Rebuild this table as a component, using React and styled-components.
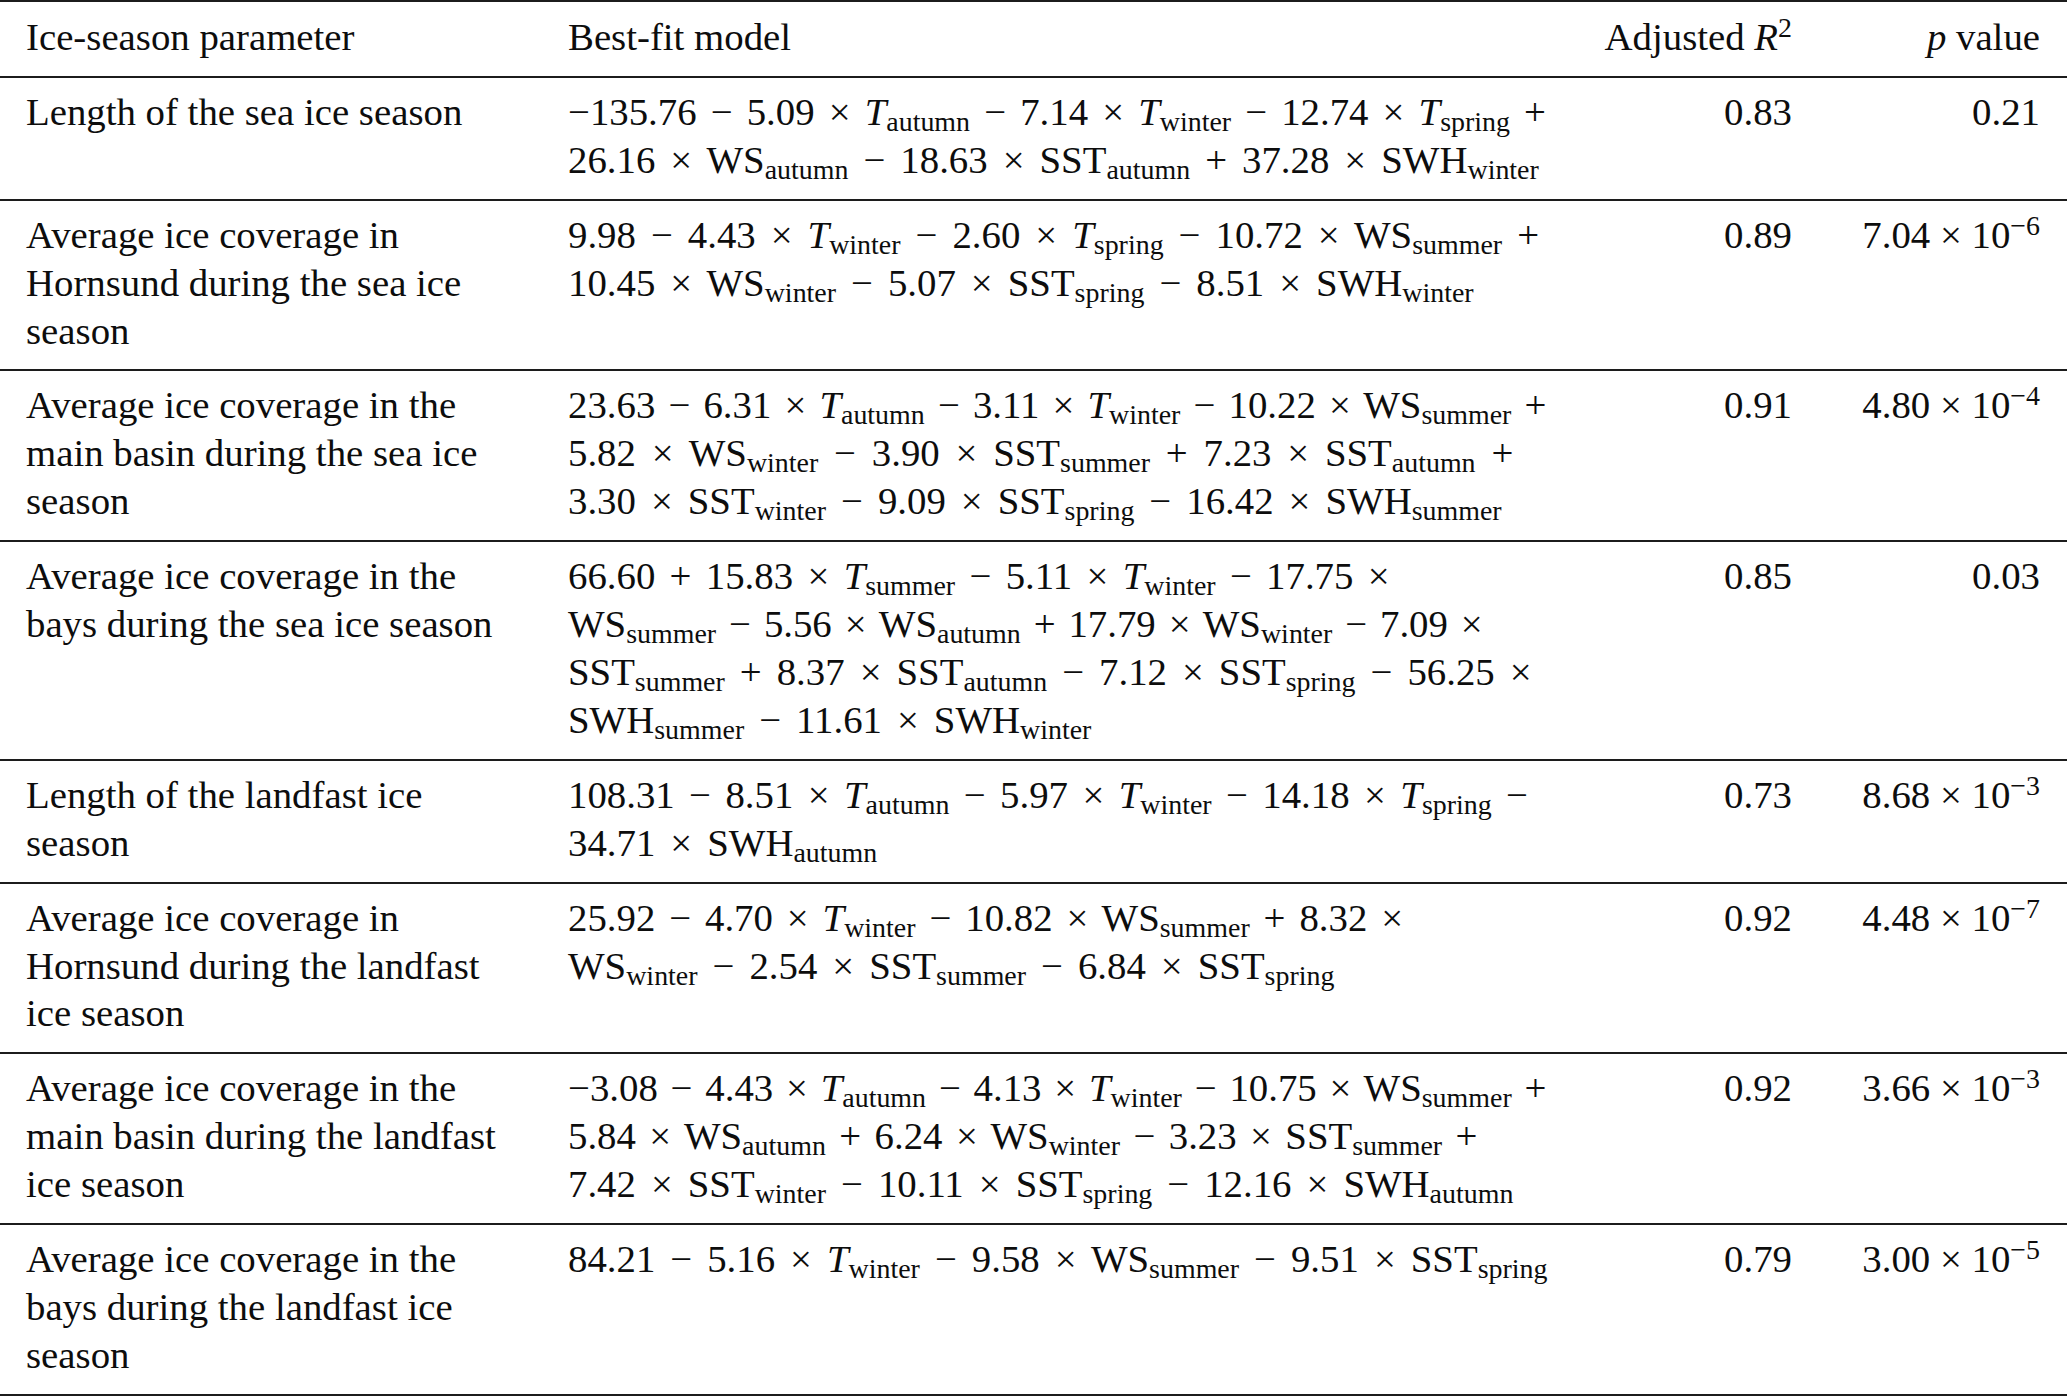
import React from 'react';
import styled, { createGlobalStyle } from 'styled-components';

const GlobalStyle = createGlobalStyle`
  html, body {
    margin: 0;
    padding: 0;
    background: #ffffff;
  }
  body {
    font-family: "Liberation Serif", "Times New Roman", serif;
    color: #111111;
  }
`;

const rows = [
  {
    param: ['Length of the sea ice season'],
    model: [
      ['−135.76 − 5.09 × T_autumn − 7.14 × T_winter − 12.74 × T_spring +', 4.4],
      ['26.16 × WS_autumn − 18.63 × SST_autumn + 37.28 × SWH_winter'],
    ],
    r2: '0.83',
    p: { value: '0.21' },
  },
  {
    param: ['Average ice coverage in', 'Hornsund during the sea ice', 'season'],
    model: [
      ['9.98 − 4.43 × T_winter − 2.60 × T_spring − 10.72 × WS_summer +'],
      ['10.45 × WS_winter − 5.07 × SST_spring − 8.51 × SWH_winter'],
    ],
    r2: '0.89',
    p: { value: '7.04', exp: '−6' },
  },
  {
    param: ['Average ice coverage in the', 'main basin during the sea ice', 'season'],
    model: [
      ['23.63 − 6.31 × T_autumn − 3.11 × T_winter − 10.22 × WS_summer +', 3.4],
      ['5.82 × WS_winter − 3.90 × SST_summer + 7.23 × SST_autumn +', 6.1],
      ['3.30 × SST_winter − 9.09 × SST_spring − 16.42 × SWH_summer'],
    ],
    r2: '0.91',
    p: { value: '4.80', exp: '−4' },
  },
  {
    param: ['Average ice coverage in the', 'bays during the sea ice season'],
    model: [
      ['66.60 + 15.83 × T_summer − 5.11 × T_winter − 17.75 ×', 4.6],
      ['WS_summer − 5.56 × WS_autumn + 17.79 × WS_winter − 7.09 ×', 3.2],
      ['SST_summer + 8.37 × SST_autumn − 7.12 × SST_spring − 56.25 ×'],
      ['SWH_summer − 11.61 × SWH_winter'],
    ],
    r2: '0.85',
    p: { value: '0.03' },
  },
  {
    param: ['Length of the landfast ice', 'season'],
    model: [
      ['108.31 − 8.51 × T_autumn − 5.97 × T_winter − 14.18 × T_spring −', 4.7],
      ['34.71 × SWH_autumn'],
    ],
    r2: '0.73',
    p: { value: '8.68', exp: '−3' },
  },
  {
    param: ['Average ice coverage in', 'Hornsund during the landfast', 'ice season'],
    model: [
      ['25.92 − 4.70 × T_winter − 10.82 × WS_summer + 8.32 ×', 4.2],
      ['WS_winter − 2.54 × SST_summer − 6.84 × SST_spring'],
    ],
    r2: '0.92',
    p: { value: '4.48', exp: '−7' },
  },
  {
    param: ['Average ice coverage in the', 'main basin during the landfast', 'ice season'],
    model: [
      ['−3.08 − 4.43 × T_autumn − 4.13 × T_winter − 10.75 × WS_summer +', 3.1],
      ['5.84 × WS_autumn + 6.24 × WS_winter − 3.23 × SST_summer +', 3.7],
      ['7.42 × SST_winter − 10.11 × SST_spring − 12.16 × SWH_autumn'],
    ],
    r2: '0.92',
    p: { value: '3.66', exp: '−3' },
  },
  {
    param: ['Average ice coverage in the', 'bays during the landfast ice', 'season'],
    model: [['84.21 − 5.16 × T_winter − 9.58 × WS_summer − 9.51 × SST_spring']],
    r2: '0.79',
    p: { value: '3.00', exp: '−5' },
  },
];

/* token like "T_winter" -> italic T with subscript, "WS_summer" -> roman WS */
const Token = ({ tok }) => {
  if (!tok.includes('_')) return tok;
  const [base, sub] = tok.split('_');
  return (
    <>
      {base === 'T' ? <Var>{base}</Var> : base}
      <Sub>{sub}</Sub>
    </>
  );
};

const Formula = ({ text }) =>
  text.split(' ').map((tok, i) => (
    <React.Fragment key={i}>
      {i > 0 && ' '}
      <Token tok={tok} />
    </React.Fragment>
  ));

const PValue = ({ p }) => (
  <>
    {p.value}
    {p.exp && (
      <>
        {' × 10'}
        <Sup>{p.exp}</Sup>
      </>
    )}
  </>
);

const App = () => {
  return (
    <>
      <GlobalStyle />
      <Table>
        <HeadRow>
          <Cell>
            <Line>Ice-season parameter</Line>
          </Cell>
          <Cell>
            <Line>Best-fit model</Line>
          </Cell>
          <Cell $align="right">
            <Line>
              Adjusted <Var>R</Var>
              <Sup>2</Sup>
            </Line>
          </Cell>
          <Cell $align="right">
            <Line>
              <Var>p</Var> value
            </Line>
          </Cell>
        </HeadRow>
        {rows.map((row, i) => (
          <Row key={i}>
            <Cell>
              {row.param.map((line, j) => (
                <Line key={j}>{line}</Line>
              ))}
            </Cell>
            <Cell>
              {row.model.map(([text, spacing], j) => (
                <FormulaLine key={j} $spacing={spacing}>
                  <Formula text={text} />
                </FormulaLine>
              ))}
            </Cell>
            <Cell $align="right">
              <Line>{row.r2}</Line>
            </Cell>
            <Cell $align="right">
              <Line>
                <PValue p={row.p} />
              </Line>
            </Cell>
          </Row>
        ))}
      </Table>
    </>
  );
};

export default App;

const Table = styled.div`
  width: 2067px;
  border-top: 2px solid #1c1c1c;
  font-family: "Liberation Serif", "Times New Roman", serif;
  font-size: 38.8px;
  line-height: 47.9px;
  color: #0d0d0d;
`;

const Row = styled.div`
  display: grid;
  grid-template-columns: 542px 984px 240px 248px;
  padding: 10px 27px 15px 26px;
  border-bottom: 2px solid #1c1c1c;
`;

const HeadRow = styled(Row)`
  padding-top: 11px;
`;

const Cell = styled.div`
  text-align: ${({ $align }) => $align || 'left'};
`;

const Line = styled.div`
  white-space: nowrap;
`;

const FormulaLine = styled(Line)`
  word-spacing: ${({ $spacing }) => $spacing ?? 5.3}px;
`;

const Var = styled.i`
  font-style: italic;
`;

const Sub = styled.sub`
  font-size: 0.72em;
  line-height: 0;
  vertical-align: -0.22em;
`;

const Sup = styled.sup`
  font-size: 0.72em;
  line-height: 0;
  vertical-align: 0.45em;
`;
